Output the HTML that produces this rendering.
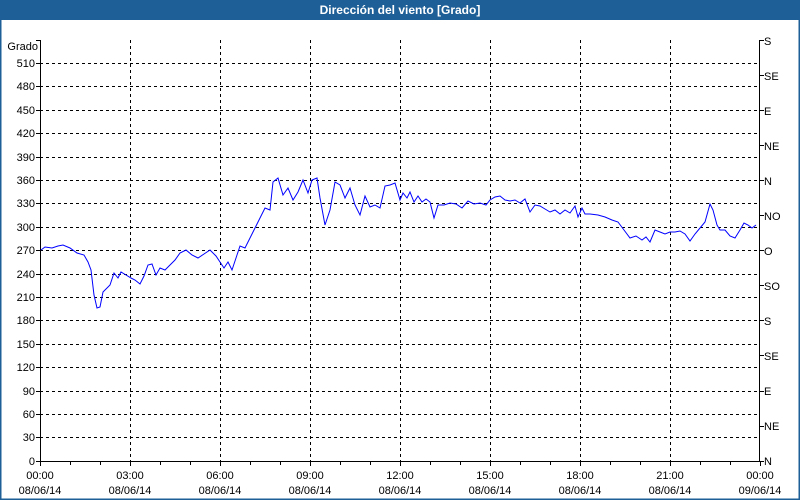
<!DOCTYPE html>
<html><head><meta charset="utf-8"><style>
html,body{margin:0;padding:0;background:#fff}
svg{display:block}
text{font-family:"Liberation Sans",sans-serif;font-size:11px;fill:#000}
</style></head><body>
<svg width="800" height="500" xmlns="http://www.w3.org/2000/svg">
<rect x="0" y="0" width="800" height="500" fill="#fff"/>
<rect x="0" y="0" width="800" height="20" fill="#1e5f97"/>
<rect x="0.5" y="0.5" width="799" height="499" fill="none" stroke="#1e5f97" stroke-width="2"/>
<text x="400" y="14" text-anchor="middle" style="fill:#fff;font-weight:bold;font-size:12px">Dirección del viento [Grado]</text>
<g stroke="#000" stroke-width="1" stroke-dasharray="3,3" fill="none">
<path d="M40 63.5H760M40 86.5H760M40 110.5H760M40 133.5H760M40 157.5H760M40 180.5H760M40 203.5H760M40 227.5H760M40 250.5H760M40 274.5H760M40 297.5H760M40 320.5H760M40 344.5H760M40 367.5H760M40 391.5H760M40 414.5H760M40 437.5H760"/>
<path d="M130.5 40V461M220.5 40V461M310.5 40V461M400.5 40V461M490.5 40V461M580.5 40V461M670.5 40V461"/>
</g>
<g stroke="#000" stroke-width="1" fill="none">
<path d="M40.5 40V462M759.5 40V462M40 461.5H760M36 40.5H41"/>
<path d="M36 63.5H40M36 86.5H40M36 110.5H40M36 133.5H40M36 157.5H40M36 180.5H40M36 203.5H40M36 227.5H40M36 250.5H40M36 274.5H40M36 297.5H40M36 320.5H40M36 344.5H40M36 367.5H40M36 391.5H40M36 414.5H40M36 437.5H40M36 461.5H40"/>
<path d="M760 40.5H764M760 75.5H764M760 110.5H764M760 145.5H764M760 180.5H764M760 215.5H764M760 250.5H764M760 285.5H764M760 320.5H764M760 355.5H764M760 391.5H764M760 426.5H764M760 461.5H764"/>
<path d="M40.5 462V466M70.5 462V465M100.5 462V465M130.5 462V466M160.5 462V465M190.5 462V465M220.5 462V466M250.5 462V465M280.5 462V465M310.5 462V466M340.5 462V465M370.5 462V465M400.5 462V466M430.5 462V465M460.5 462V465M490.5 462V466M520.5 462V465M550.5 462V465M580.5 462V466M610.5 462V465M640.5 462V465M670.5 462V466M700.5 462V465M730.5 462V465M760.5 462V466"/>
</g>
<g text-anchor="end">
<text x="38" y="50">Grado</text>
<text x="35" y="67">510</text><text x="35" y="90">480</text><text x="35" y="114">450</text><text x="35" y="137">420</text><text x="35" y="161">390</text><text x="35" y="184">360</text><text x="35" y="207">330</text><text x="35" y="231">300</text><text x="35" y="254">270</text><text x="35" y="278">240</text><text x="35" y="301">210</text><text x="35" y="324">180</text><text x="35" y="348">150</text><text x="35" y="371">120</text><text x="35" y="395">90</text><text x="35" y="418">60</text><text x="35" y="441">30</text><text x="35" y="465">0</text>
</g>
<g>
<text x="764" y="45">S</text><text x="764" y="80">SE</text><text x="764" y="115">E</text><text x="764" y="150">NE</text><text x="764" y="185">N</text><text x="764" y="220">NO</text><text x="764" y="255">O</text><text x="764" y="290">SO</text><text x="764" y="325">S</text><text x="764" y="360">SE</text><text x="764" y="395">E</text><text x="764" y="430">NE</text><text x="764" y="465">N</text>
</g>
<g text-anchor="middle">
<text x="40" y="479">00:00</text><text x="40" y="494">08/06/14</text>
<text x="130" y="479">03:00</text><text x="130" y="494">08/06/14</text>
<text x="220" y="479">06:00</text><text x="220" y="494">08/06/14</text>
<text x="310" y="479">09:00</text><text x="310" y="494">08/06/14</text>
<text x="400" y="479">12:00</text><text x="400" y="494">08/06/14</text>
<text x="490" y="479">15:00</text><text x="490" y="494">08/06/14</text>
<text x="580" y="479">18:00</text><text x="580" y="494">08/06/14</text>
<text x="670" y="479">21:00</text><text x="670" y="494">08/06/14</text>
<text x="760" y="479">00:00</text><text x="760" y="494">09/06/14</text>
</g>
<polyline fill="none" stroke="#0000ff" stroke-width="1" points="41,250 45,247 52,248 58,246 63,245 70,248 77,253 84,255 88,262 91,270 94,295 97,308 100,307 103,292 107,288 110,285 114,273 118,278 121,272 126,275 131,278 135,280 140,284 144,276 148,265 152,264 156,275 160,268 165,270 170,265 175,260 180,253 186,250 192,255 198,258 204,254 210,250 216,256 220,262 224,268 228,262 232,270 237,255 240,246 245,248 250,238 255,228 260,218 265,208 270,210 273,182 278,178 283,195 288,188 293,200 298,192 303,180 308,193 312,180 317,178 320,198 325,225 330,210 335,182 340,185 345,198 350,188 355,205 360,215 365,196 370,207 375,205 380,208 385,186 390,185 395,183 400,200 403,193 407,198 410,192 414,202 418,196 422,202 426,199 430,202 434,218 438,205 444,205 450,203 456,204 462,208 468,201 474,204 480,203 486,205 490,200 495,197 500,196 505,200 510,201 515,200 520,203 525,199 530,212 535,205 540,206 545,209 550,212 555,210 560,214 565,210 570,213 575,206 578,217 582,208 585,214 590,214 598,215 605,217 612,220 618,222 624,230 630,238 636,236 642,240 646,237 650,242 655,230 660,232 665,234 670,232 675,232 680,231 685,234 690,241 695,234 700,228 705,222 710,204 713,210 717,225 720,230 725,230 730,236 735,238 740,230 744,223 748,225 752,228 756,225"/>
</svg>
</body></html>
